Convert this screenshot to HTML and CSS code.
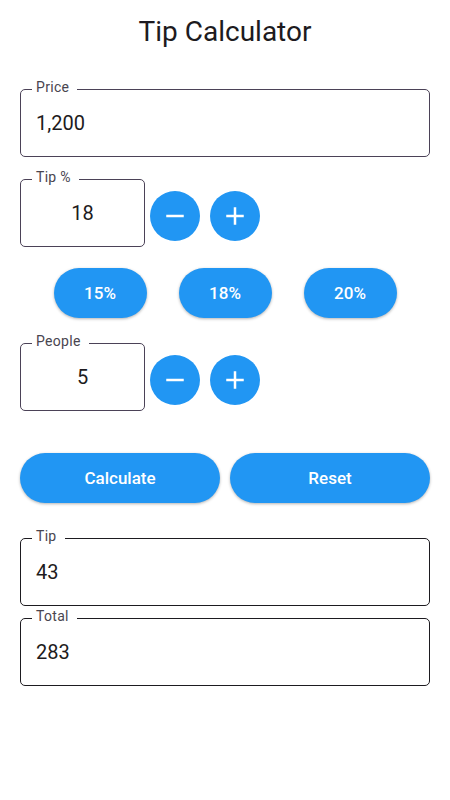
FILE: index.html
```html
<!DOCTYPE html>
<html lang="en">
<head>
<meta charset="utf-8">
<title>Tip Calculator</title>
<link rel="stylesheet" href="styles.css">
</head>
<body>
<header class="app-bar">
  <h1 class="title">Tip Calculator</h1>
</header>
<main class="content">
  <div class="field field-wide">
    <span class="field-label">Price</span>
    <span class="field-value">1,200</span>
  </div>

  <div class="stepper-row row-tip">
    <div class="field field-small">
      <span class="field-label">Tip %</span>
      <span class="field-value centered">18</span>
    </div>
    <div class="steppers">
      <button class="round-btn" aria-label="decrease">
        <svg viewBox="0 0 24 24" width="30" height="30"><path d="M19 13H5v-2h14v2z" fill="#fff"/></svg>
      </button>
      <button class="round-btn" aria-label="increase">
        <svg viewBox="0 0 24 24" width="30" height="30"><path d="M19 13h-6v6h-2v-6H5v-2h6V5h2v6h6v2z" fill="#fff"/></svg>
      </button>
    </div>
  </div>

  <div class="chips">
    <button class="chip">15%</button>
    <button class="chip">18%</button>
    <button class="chip">20%</button>
  </div>

  <div class="stepper-row row-people">
    <div class="field field-small">
      <span class="field-label">People</span>
      <span class="field-value centered">5</span>
    </div>
    <div class="steppers">
      <button class="round-btn" aria-label="decrease">
        <svg viewBox="0 0 24 24" width="30" height="30"><path d="M19 13H5v-2h14v2z" fill="#fff"/></svg>
      </button>
      <button class="round-btn" aria-label="increase">
        <svg viewBox="0 0 24 24" width="30" height="30"><path d="M19 13h-6v6h-2v-6H5v-2h6V5h2v6h6v2z" fill="#fff"/></svg>
      </button>
    </div>
  </div>

  <div class="actions">
    <button class="action-btn">Calculate</button>
    <button class="action-btn">Reset</button>
  </div>

  <div class="field field-wide result result-tip">
    <span class="field-label">Tip</span>
    <span class="field-value">43</span>
  </div>
  <div class="field field-wide result result-total">
    <span class="field-label">Total</span>
    <span class="field-value">283</span>
  </div>
</main>
</body>
</html>
```

FILE: styles.css
```css
* {
  box-sizing: border-box;
}

html, body {
  margin: 0;
  padding: 0;
  background: #ffffff;
}

body {
  font-family: Roboto, "Liberation Sans", Arial, sans-serif;
  color: #1d1b20;
  width: 450px;
}

.app-bar {
  padding-top: 14px;
}

.title {
  margin: 0;
  font-size: 28px;
  font-weight: 400;
  line-height: 36px;
  text-align: center;
  color: #1d1b20;
}

.content {
  padding: 0 20px;
}

.field {
  position: relative;
  height: 68px;
  border: 1px solid #4b4257;
  border-radius: 5px;
  display: flex;
  align-items: center;
  padding: 0 15px 1px 15px;
}

.field-wide {
  width: 410px;
  margin-top: 39px;
}

.field-small {
  width: 125px;
  justify-content: center;
  padding-left: 0;
  padding-right: 0;
}

.field-label {
  position: absolute;
  left: 11px;
  top: -11px;
  padding: 0 8px 0 4px;
  background: #ffffff;
  font-size: 14px;
  line-height: 16px;
  letter-spacing: 0.3px;
  color: #49454f;
}

.field-value {
  font-size: 20px;
  color: #1d1b20;
}

.centered {
  text-align: center;
}

.stepper-row {
  display: flex;
  align-items: flex-start;
}

.row-tip {
  margin-top: 22px;
}

.row-people {
  margin-top: 25px;
}

.steppers {
  display: flex;
  gap: 10px;
  margin-left: 5px;
  margin-top: 12px;
}

.round-btn {
  width: 50px;
  height: 50px;
  border-radius: 50%;
  border: none;
  padding: 0;
  background: #2196f3;
  display: flex;
  align-items: center;
  justify-content: center;
}

.round-btn svg {
  display: block;
}

.chips {
  margin-top: 21px;
  display: flex;
  justify-content: center;
  gap: 32px;
}

.chip {
  width: 93px;
  height: 50px;
  border: none;
  border-radius: 25px;
  background: #2196f3;
  color: #ffffff;
  font-family: Roboto, "Liberation Sans", Arial, sans-serif;
  font-size: 17px;
  font-weight: 500;
  box-shadow: 0 1px 3px rgba(0, 0, 0, 0.3);
  padding: 0;
}

.actions {
  margin-top: 42px;
  display: flex;
  gap: 10px;
}

.action-btn {
  flex: 1;
  height: 50px;
  border: none;
  border-radius: 25px;
  background: #2196f3;
  color: #ffffff;
  font-family: Roboto, "Liberation Sans", Arial, sans-serif;
  font-size: 17px;
  font-weight: 500;
  box-shadow: 0 1px 3px rgba(0, 0, 0, 0.3);
  padding: 0;
}

.result {
  border-color: #1d1b20;
}

.result-tip {
  margin-top: 35px;
}

.result-total {
  margin-top: 12px;
}
```
